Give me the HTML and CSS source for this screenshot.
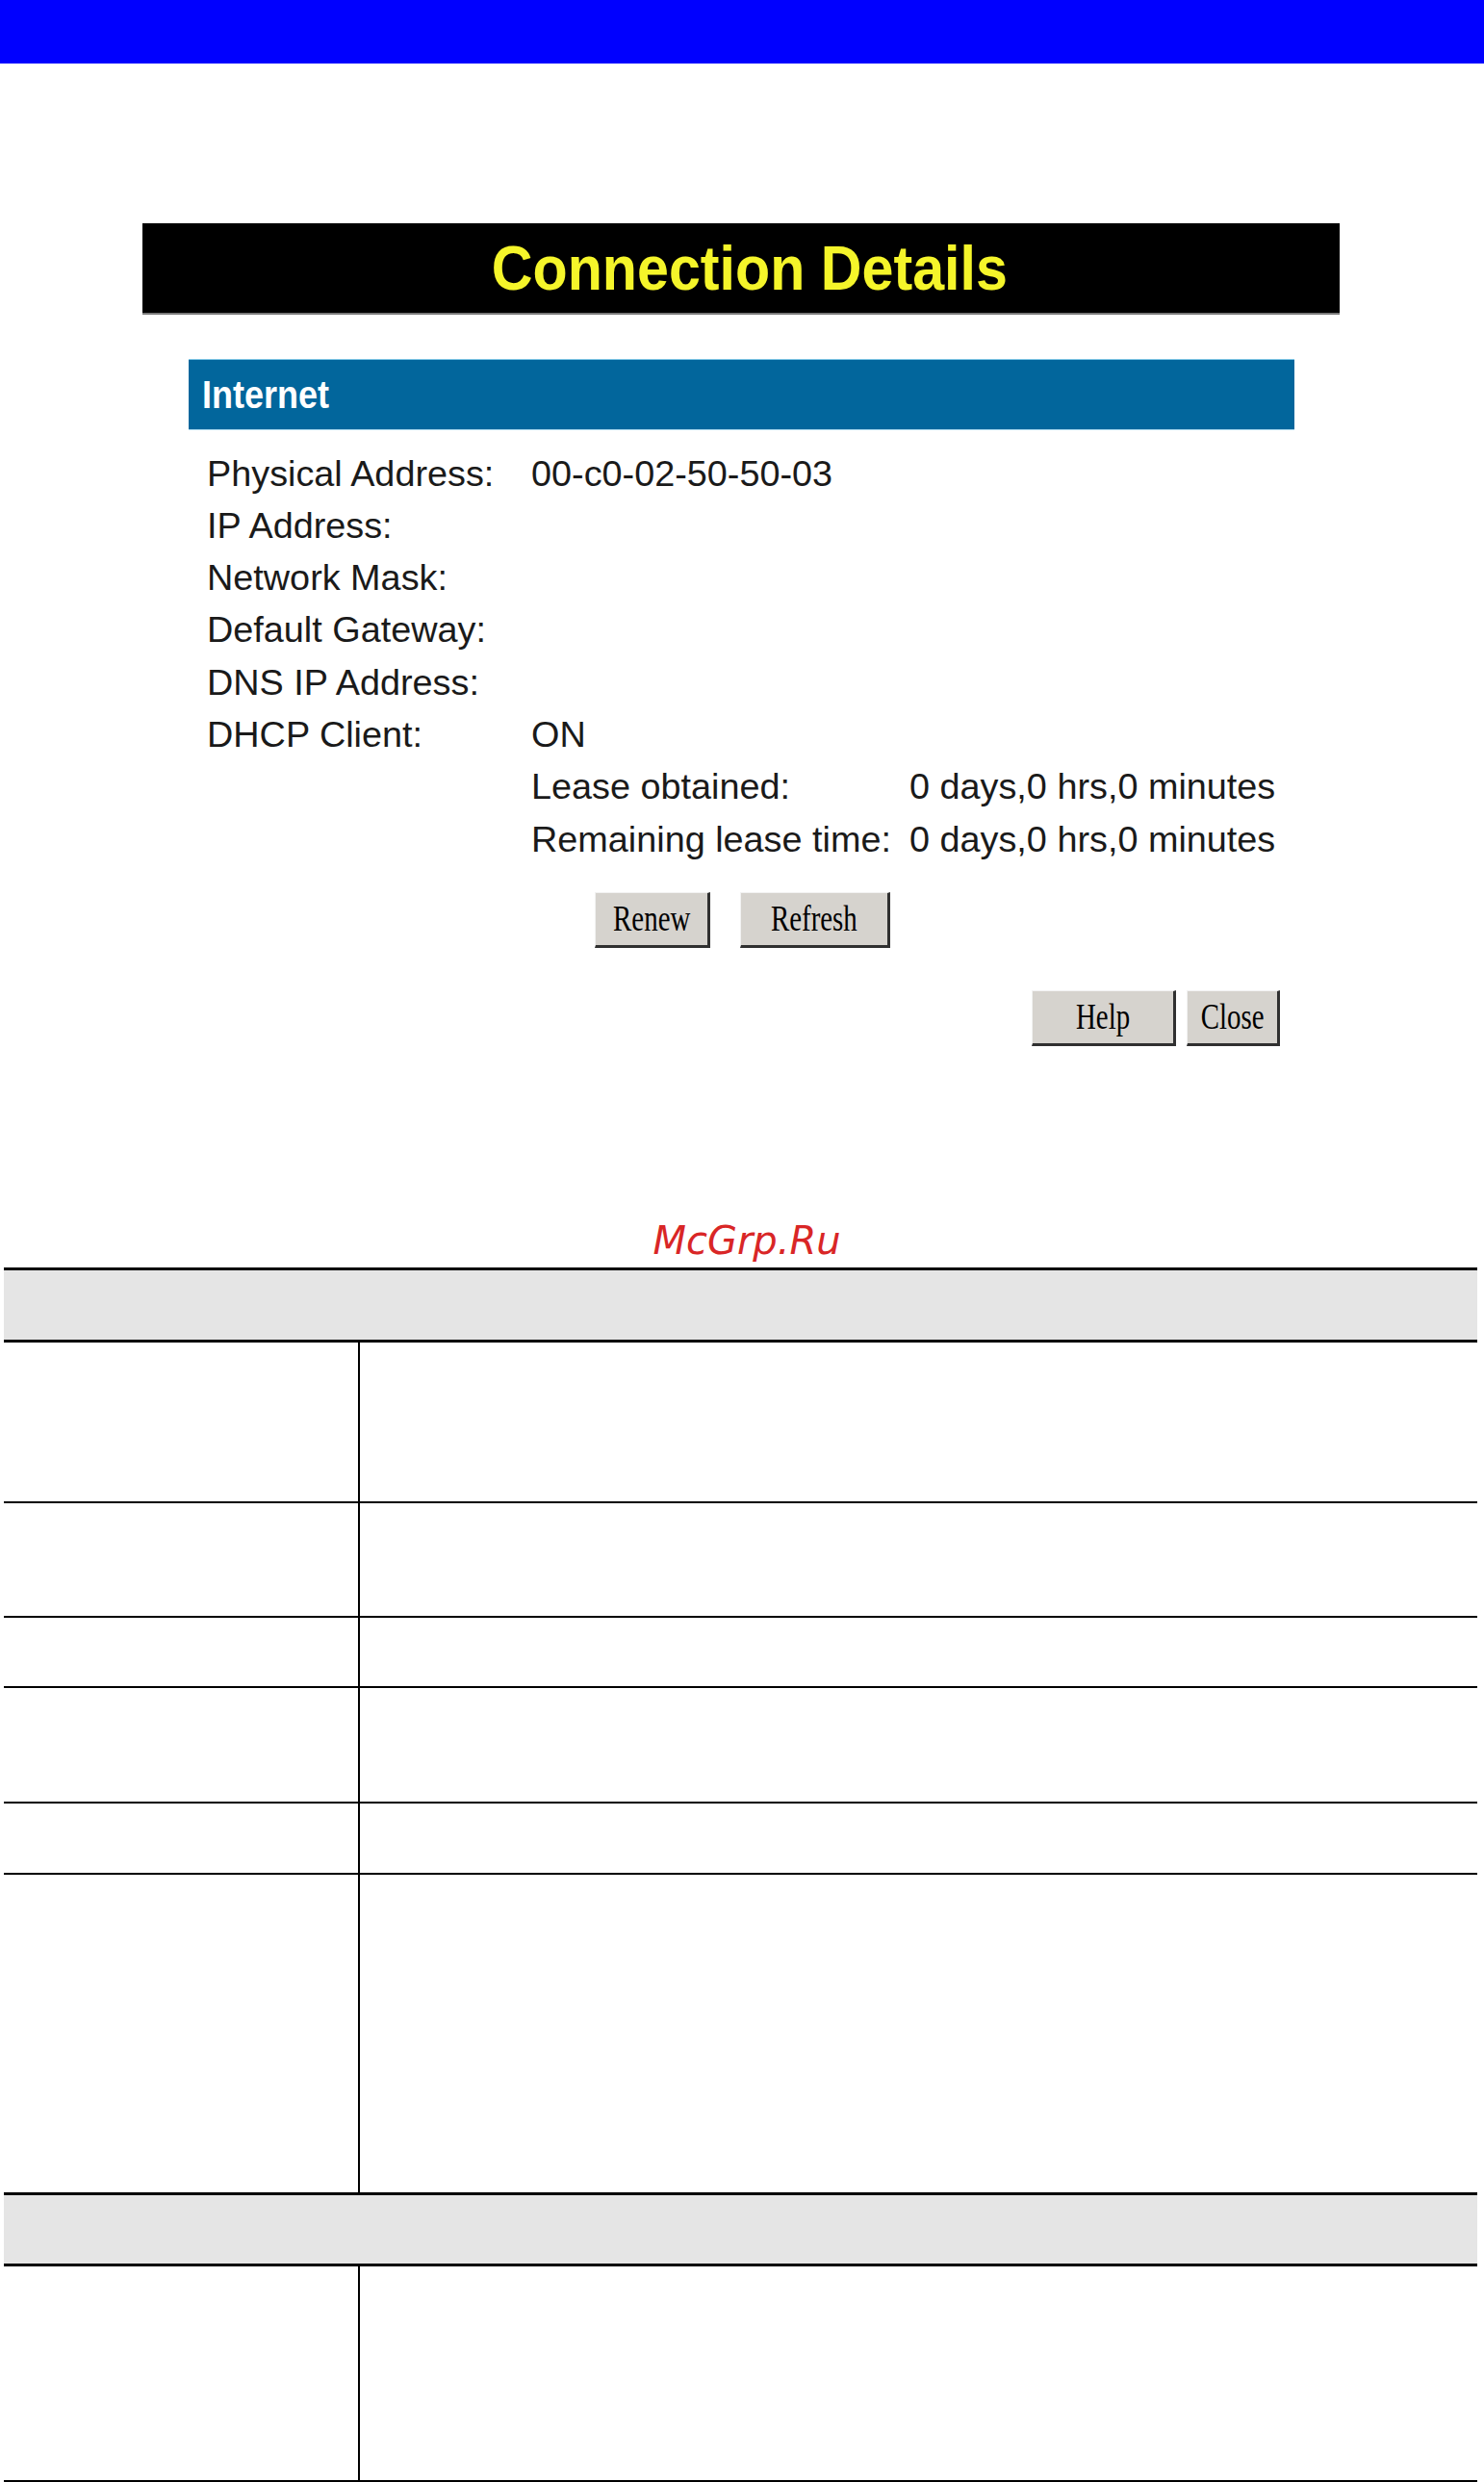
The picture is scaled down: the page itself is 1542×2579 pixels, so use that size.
FILE: index.html
```html
<!DOCTYPE html>
<html>
<head>
<meta charset="utf-8">
<title>Connection Details</title>
<link rel="stylesheet" href="styles.css">
</head>
<body>
<div class="topbar"></div>

<div class="panel">
  <div class="title-bar"><span class="title-text">Connection Details</span></div>
  <div class="section-bar"><span class="section-text">Internet</span></div>

  <div class="details">
    <div class="lbl">Physical Address:</div><div class="val">00-c0-02-50-50-03</div>
    <div class="lbl">IP Address:</div><div class="val"></div>
    <div class="lbl">Network Mask:</div><div class="val"></div>
    <div class="lbl">Default Gateway:</div><div class="val"></div>
    <div class="lbl">DNS IP Address:</div><div class="val"></div>
    <div class="lbl">DHCP Client:</div><div class="val">ON</div>
    <div class="lbl"></div>
    <div class="val lease">
      <div>Lease obtained:</div><div>0 days,0 hrs,0 minutes</div>
      <div>Remaining lease time:</div><div>0 days,0 hrs,0 minutes</div>
    </div>
  </div>

  <div class="btn-row first">
    <button class="btn renew"><span>Renew</span></button>
    <button class="btn refresh"><span>Refresh</span></button>
  </div>
  <div class="btn-row second">
    <button class="btn help"><span>Help</span></button>
    <button class="btn close"><span>Close</span></button>
  </div>
</div>

<div class="watermark">McGrp.Ru</div>

<div class="doc-table">
  <div class="hdr h1"></div>
  <div class="row r1"><div class="c1"></div><div class="c2"></div></div>
  <div class="row r2"><div class="c1"></div><div class="c2"></div></div>
  <div class="row r3"><div class="c1"></div><div class="c2"></div></div>
  <div class="row r4"><div class="c1"></div><div class="c2"></div></div>
  <div class="row r5"><div class="c1"></div><div class="c2"></div></div>
  <div class="row r6 nob"><div class="c1"></div><div class="c2"></div></div>
  <div class="hdr h2"></div>
  <div class="row r7"><div class="c1"></div><div class="c2"></div></div>
</div>
</body>
</html>
```
FILE: styles.css
```css
html, body {
  margin: 0;
  padding: 0;
  background: #fff;
}
body {
  font-family: "Liberation Sans", Arial, sans-serif;
  color: #111;
  width: 1542px;
}
.topbar {
  height: 66px;
  background: #0000ff;
}
.panel {
  margin: 166px 0 0 148px;
  width: 1244px;
}
.title-bar {
  height: 93px;
  background: #000;
  border-bottom: 2px solid #7a7a7a;
  display: flex;
  align-items: center;
  justify-content: center;
  padding-left: 18px;
  box-sizing: content-box;
}
.title-text {
  display: inline-block;
  color: #f5f52a;
  font-weight: bold;
  font-size: 64px;
  line-height: 1;
  transform: scaleX(0.925);
}
.section-bar {
  margin: 46px 0 0 48px;
  width: 1149px;
  height: 74px;
  background: #02669c;
  border-top: 1px solid #7cc4e4;
  border-bottom: 1px solid #a8d8ee;
  display: flex;
  align-items: center;
  padding-left: 14px;
  box-sizing: border-box;
}
.section-text {
  display: inline-block;
  color: #fff;
  font-weight: bold;
  font-size: 40px;
  line-height: 1;
  transform: scaleX(0.9);
  transform-origin: left center;
}
.details {
  margin: 17.5px 0 0 67px;
  display: grid;
  grid-template-columns: 337px auto;
  font-size: 37.8px;
  line-height: 54.3px;
  color: #1a1a1a;
}
.lease {
  display: grid;
  grid-template-columns: 393px auto;
}
.btn-row {
  display: flex;
}
.btn-row.first {
  margin: 28px 0 0 470px;
  gap: 31px;
}
.btn-row.second {
  margin: 44px 0 0 924px;
  gap: 11px;
}
.btn {
  height: 58px;
  padding: 0;
  margin: 0;
  background: #d6d3ce;
  border-style: solid;
  border-width: 1px 3px 3px 1px;
  border-color: #f2f2f2 #303030 #303030 #f2f2f2;
  font-family: "Liberation Serif", "Times New Roman", serif;
  font-size: 34px;
  color: #000;
  display: flex;
  align-items: center;
  justify-content: center;
  box-sizing: border-box;
}
.btn span {
  display: inline-block;
  transform: scale(0.85, 1.1);
  line-height: 1;
}
.renew { width: 120px; }
.refresh { width: 156px; }
.help { width: 150px; }
.close { width: 97px; }

.watermark {
  margin-top: 178px;
  text-align: center;
  padding-left: 10px;
  font-family: "DejaVu Sans", Verdana, sans-serif;
  font-style: italic;
  font-size: 40px;
  line-height: 48px;
  height: 48px;
  color: #d92626;
}
.doc-table {
  margin: 4px 0 0 4px;
  width: 1531px;
}
.hdr {
  background: #e5e5e5;
  border-top: 3px solid #000;
  border-bottom: 3px solid #000;
}
.h1 { height: 72px; }
.h2 { height: 71px; }
.row {
  display: flex;
  border-bottom: 2px solid #000;
}
.row.nob { border-bottom: none; }
.c1 {
  width: 368px;
  border-right: 2px solid #000;
}
.c2 { flex: 1; }
.r1 { height: 165px; }
.r2 { height: 117px; }
.r3 { height: 71px; }
.r4 { height: 118px; }
.r5 { height: 72px; }
.r6 { height: 330px; }
.r7 { height: 222px; }
```
